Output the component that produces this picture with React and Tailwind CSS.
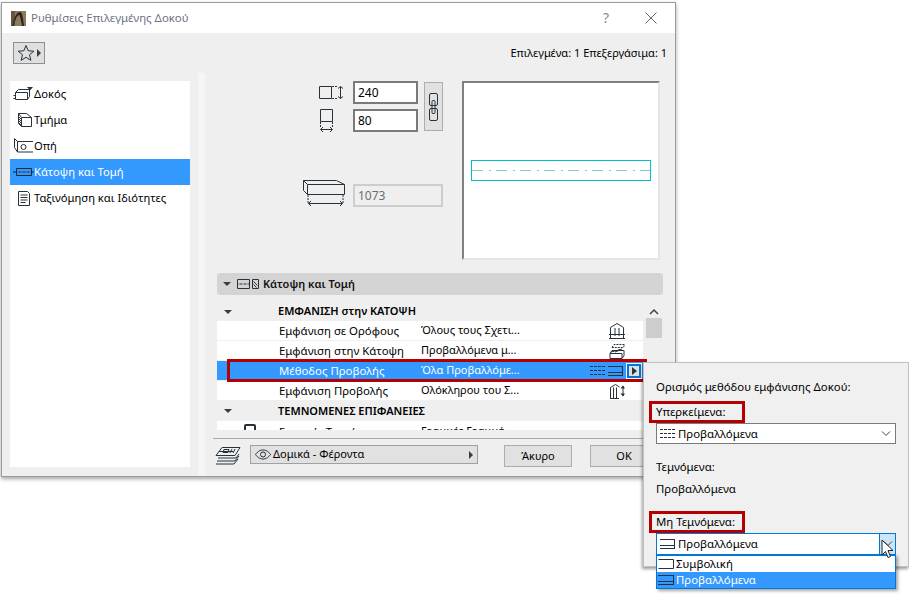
import React from 'react';

const INK = '#26323c';

const Ico = ({ w = 24, h = 16, children, className = '' }) => (
  <svg width={w} height={h} viewBox={`0 0 ${w} ${h}`} fill="none" stroke={INK} strokeWidth="1" className={`shrink-0 ${className}`}>
    {children}
  </svg>
);

const BeamIcon = () => (
  <Ico w={21} h={16}>
    <path d="M2.500 6.500h12v7h-12zM2.500 6.500l3-3h11v7l-2 3M.500 9.500h2M.500 12.500h2" />
    <path d="M14 1h6l-3 3.500z" fill={INK} stroke="none" />
  </Ico>
);
const SegmentIcon = () => (
  <Ico w={21} h={16}>
    <path d="M5.500 1.500h8l5 4v9h-10l-3-3v-10zM8.500 14.500v-9h10M8.500 5.500l-3-4" />
    <path d="M6.500 5v7M7.500 6v7" strokeDasharray="1 1" />
  </Ico>
);
const OpeningIcon = () => (
  <Ico w={21} h={16}>
    <path d="M20 3.500H4.500L1.500 .5v9l3 4.500H20M4.500 3.500V14" />
    <circle cx="10.500" cy="9" r="2.500" />
  </Ico>
);
const PlanIcon = () => (
  <Ico w={21} h={10}>
    <path d="M3.500 1.500h15v7h-15zM0 5h21" stroke="#1d2a36" />
    <path d="M4 5h14" stroke="#3399ff" strokeDasharray="2 2" />
  </Ico>
);
const ListIcon = () => (
  <Ico w={21} h={17}>
    <path d="M5.500 1.500h9l2 2v12h-11z" />
    <path d="M7.500 5h7M7.500 7.500h7M7.500 10h7M7.500 12.500h5" />
  </Ico>
);

const MENU = [
  { label: 'Δοκός', icon: <BeamIcon /> },
  { label: 'Τμήμα', icon: <SegmentIcon /> },
  { label: 'Οπή', icon: <OpeningIcon /> },
  { label: 'Κάτοψη και Τομή', icon: <PlanIcon />, active: true },
  { label: 'Ταξινόμηση και Ιδιότητες', icon: <ListIcon /> },
];

const HatchLines = () => (
  <Ico w={15} h={12}>
    <path d="M0 1.500h15M0 5.500h15M0 9.500h15" strokeDasharray="3 1" />
  </Ico>
);
const SolidLines = ({ w = 15 }) => (
  <Ico w={w} h={12}>
    <path d={`M0 1.500h${w}M0 7.500h${w}M0 10.500h${w}M${w - .5} 1.500v9`} />
  </Ico>
);

const FloorsIcon = () => (
  <Ico w={16} h={16}>
    <path d="M1.500 15.500v-11l6.500-4 6.500 4v11M0 15.500h16M0 11.500h16M6 5v8M10 5v8" />
  </Ico>
);
const PlanDisplayIcon = () => (
  <Ico w={16} h={16}>
    <path d="M3 4.500l2-3h10.500l-1 3H3z" strokeDasharray="2 1" />
    <path d="M1 10.500h12v5H1zM1 10.500l2-3h12v5l-2 3M2 9l11-3M6 9l5-2" />
  </Ico>
);
const ViewDisplayIcon = () => (
  <Ico w={16} h={16}>
    <path d="M1.500 15.500v-11l5-3 4 2.500M4.500 4.500v11M1 15.500h9M7.500 4.500v11" />
    <path d="M14 3v10" />
    <path d="M11.500 5.500L14 2.500l2 3zM11.500 10.500L14 13.500l2-3z" fill={INK} stroke="none" />
  </Ico>
);

const ROWS = [
  { label: 'Εμφάνιση σε Ορόφους', value: 'Όλους τους Σχετι...', icon: <FloorsIcon /> },
  { label: 'Εμφάνιση στην Κάτοψη', value: 'Προβαλλόμενα μ...', icon: <PlanDisplayIcon /> },
  { label: 'Μέθοδος Προβολής', value: 'Όλα Προβαλλόμε...', active: true },
  { label: 'Εμφάνιση Προβολής', value: 'Ολόκληρου του Σ...', icon: <ViewDisplayIcon /> },
];

const Caret = ({ className = '' }) => (
  <span className={`w-0 h-0 border-l-[4px] border-r-[4px] border-t-[4px] border-l-transparent border-r-transparent border-t-[#3c3c3c] ${className}`} />
);

const Field = ({ value }) => (
  <div className="w-[65px] h-[23px] border-2 border-[#7a7a7a] bg-white flex items-center pl-[3px] text-[12px] leading-none text-black">{value}</div>
);

const Dialog = () => (
  <div className="absolute left-[1px] top-[2px] w-[675px] h-[475px] border border-[#9a9a9a] bg-[#efefef] shadow-[0_2px_4px_rgba(0,0,0,0.35)] flex flex-col overflow-hidden">
    {/* title bar */}
    <div className="h-[30px] shrink-0 bg-white flex items-center pl-[9px]">
      <svg width="15" height="15" viewBox="0 0 15 15" className="shrink-0">
        <rect width="15" height="15" fill="#8a7a5e" />
        <path d="M1 15C3 6 6 1 9 1c2 0 3 5 4 14h-2C10 9 9 4 8 4 6 4 4 9 3 15z" fill="#2b2418" />
        <rect width="4" height="15" fill="#4a3f2d" opacity=".6" />
      </svg>
      <span className="ml-[5px] text-[11.400px] text-[#6f7187]">Ρυθμίσεις Επιλεγμένης Δοκού</span>
      <span className="ml-auto text-[14px] text-[#8a8a8a] mr-[36px] leading-none">?</span>
      <svg width="12" height="12" viewBox="0 0 12 12" stroke="#6b6b6b" className="mr-[18px]"><path d="M.5.500l11 11M11.500.500l-11 11" /></svg>
    </div>

    {/* toolbar */}
    <div className="h-[40px] shrink-0 flex items-start pl-[11px] pr-[8px] pt-[9px]">
      <div className="w-[32px] h-[22px] border border-[#8f8f8f] bg-[#dfdfdf] flex items-center pl-[3px] gap-[2px]">
        <svg width="18" height="18" viewBox="0 0 18 18" fill="none" stroke={INK}>
          <path d="M9 1.500l2.200 5.300 5.600.400-4.300 3.600 1.400 5.500L9 13.300l-4.900 3 1.400-5.500-4.300-3.600 5.600-.400z" />
        </svg>
        <span className="w-0 h-0 border-y-[4px] border-l-[4px] border-y-transparent border-l-[#3c3c3c]" />
      </div>
      <span className="ml-auto mt-[1px] text-[11px] leading-[20px] text-black">Επιλεγμένα: 1 Επεξεργάσιμα: 1</span>
    </div>

    {/* main area */}
    <div className="flex-1 flex min-h-0">
      <div className="ml-[8px] mt-[8px] mb-[9px] w-[180px] bg-white shrink-0">
        {MENU.map((m) => (
          <div key={m.label} className={`h-[26px] flex items-center pl-[3px] text-[11.200px] ${m.active ? 'bg-[#3399ff] text-white' : 'text-black'}`}>
            <span className="w-[21px] flex justify-center">{m.icon}</span>
            <span>{m.label}</span>
          </div>
        ))}
      </div>
      <div className="ml-[8px] w-[7px] bg-[#f5f5f5] shrink-0" />

      <div className="ml-[8px] flex-1 min-w-0 flex flex-col">
        {/* dimensions + preview */}
        <div className="h-[200px] shrink-0 flex pt-[8px]">
          <div className="w-[140px] flex flex-col items-end shrink-0 pr-[8px]">
            <Ico w={26} h={14} className="mt-[5px]">
              <path d="M.500.500h12v12h-12z" />
              <path d="M13 .500h6M13 12.500h6" strokeDasharray="2 1" />
              <path d="M21.500 1v11M19 2.500l2.500-2 2.500 2M19 10.500l2.500 2 2.500-2" />
            </Ico>
            <Ico w={16} h={24} className="mt-[9px] mr-[10px]">
              <path d="M1.500.500h12v12h-12z" />
              <path d="M1.500 13v6M13.500 13v6" strokeDasharray="2 1" />
              <path d="M2 20.500h11M4 18l-2.500 2.500L4 23M11 18l2.500 2.500L11 23" />
            </Ico>
            <Ico w={42} h={26} className="mt-[47px]">
              <path d="M4.500 4.500h37v10h-37zM4.500 14.500l-4-4v-10h33l8 4M.5.5l4 4" />
              <path d="M5 15v8M40 15v8" strokeDasharray="2 1" />
              <path d="M5.500 23.500h34M8 21l-2.500 2.500L8 26M37 21l2.500 2.500L37 26" />
            </Ico>
          </div>
          <div className="shrink-0 w-[109px]">
            <div className="flex">
              <div className="flex flex-col gap-[5px]">
                <Field value="240" />
                <Field value="80" />
              </div>
              <div className="ml-[6px] w-[19px] h-[49px] mt-[1px] border border-[#adadad] bg-[#e1e1e1] flex items-center justify-center shrink-0">
                <svg width="9" height="28" viewBox="0 0 9 28" fill="none" stroke={INK}>
                  <rect x=".500" y=".500" width="8" height="12" rx="1.500" />
                  <rect x=".500" y="15.500" width="8" height="12" rx="1.500" />
                  <rect x="3" y="7.500" width="3" height="13" rx="1" />
                </svg>
              </div>
            </div>
            <div className="mt-[52px] w-[90px] h-[23px] border-2 border-[#cdcdcd] bg-[#efefef] flex items-center pl-[3px] text-[12px] leading-none text-[#6d6d78]">1073</div>
          </div>
          <div className="w-[198px] h-[179px] border-2 border-t-[#808080] border-l-[#808080] border-r-[#e5e5e5] border-b-[#e5e5e5] bg-white flex items-center justify-center shrink-0">
            <div className="w-[180px] h-[21px] border border-[#00c0c8] flex items-center">
              <svg width="178" height="3" viewBox="0 0 178 3" fill="none"><path d="M0 1.500h178" stroke="#7fcfc0" strokeDasharray="11 6 2 5" /></svg>
            </div>
          </div>
        </div>

        {/* settings panel */}
        <div className="ml-[4px] w-[446px] h-[22px] shrink-0 bg-[#d4d4d4] rounded-[3px] flex items-center pl-[6px] text-[11px] font-semibold text-[#111]">
          <Caret />
          <svg width="24" height="12" viewBox="0 0 24 12" fill="none" stroke={INK} className="ml-[5px] shrink-0">
            <path d="M1.500 1.500h12v9h-12zM1 6h13" /><path d="M2 6h11" stroke="#d4d4d4" strokeDasharray="2 2" /><path d="M16.500 1.500h6v9h-6zM17.500 3.500l4 4M17.500 6.500l3 3" />
          </svg>
          <span className="ml-[3px]">Κάτοψη και Τομή</span>
        </div>

        <div className="ml-[4px] mt-[7px] h-[128px] w-[446px] shrink-0 relative overflow-hidden flex">
          <div className="w-[426px] shrink-0 text-[11.400px]">
            <div className="h-[19px] flex items-center font-semibold text-[11px]">
              <Caret className="ml-[7px]" />
              <span className="ml-[46px]">ΕΜΦΑΝΙΣΗ στην ΚΑΤΟΨΗ</span>
            </div>
            {ROWS.map((r) => (
              <div key={r.label} className={`h-[20px] flex items-center border-b border-[#efefef] ${r.active ? 'bg-[#3399ff] text-white' : 'bg-white text-black'}`}>
                <span className="ml-[62px] w-[142px] shrink-0 whitespace-nowrap">{r.label}</span>
                <span className="text-[11px]">{r.value}</span>
                {r.active ? (
                  <div className="ml-auto flex items-center mr-[1px] gap-[3px]">
                    <HatchLines />
                    <SolidLines />
                    <span className="w-[16px] h-[16px] bg-white flex items-center justify-center">
                      <span className="w-[14px] h-[14px] border-2 border-[#0078d7] bg-[#e1e1e1] flex items-center justify-center">
                        <span className="w-0 h-0 border-y-[4px] border-l-[5px] border-y-transparent border-l-[#333]" />
                      </span>
                    </span>
                  </div>
                ) : (
                  <span className="ml-auto mr-[18px]">{r.icon}</span>
                )}
              </div>
            ))}
            <div className="h-[20px] flex items-center font-semibold text-[11px]">
              <Caret className="ml-[7px]" />
              <span className="ml-[46px]">ΤΕΜΝΟΜΕΝΕΣ ΕΠΙΦΑΝΕΙΕΣ</span>
            </div>
            <div className="h-[20px] bg-white flex items-start">
              <span className="ml-[27px] w-[12px] h-[12px] border-2 border-[#26323c] rounded-[2px] mt-[3px] shrink-0" />
              <span className="ml-[23px] w-[142px] shrink-0 mt-[2px]">Γραμμές Τεμνόμενων</span>
              <span className="mt-[2px] text-[11px]">Γραμμές Γραμμή</span>
            </div>
          </div>
          <div className="w-[16px] ml-[3px] flex flex-col items-center">
            <svg width="10" height="8" viewBox="0 0 10 8" fill="none" stroke="#444" strokeWidth="1.500" className="mt-[6px]"><path d="M1 6l4-4 4 4" /></svg>
            <div className="mt-[2px] w-full h-[20px] bg-[#cdcdcd]" />
          </div>
          {/* red highlight over the selected row */}
          <div className="absolute left-[10px] top-[57px] w-[420px] h-[23px] border-[3px] border-[#b40000]" />
        </div>

        {/* footer */}
        <div className="mt-[8px] flex-1 border-t border-[#a8a8a8] flex items-start pt-[6px]">
          <svg width="26" height="19" viewBox="0 0 26 19" fill="none" stroke={INK} className="ml-[2px] mt-[1px] shrink-0">
            <path d="M7 1.500h18l-5 8H1zM4 5.500h14M3 12h18l3-4M2 15h18l4-5M1 18h18l4-5" />
            <path d="M9 3.500h5l-1 3H8zM17 3l-2 4M20 3l-2 4" />
          </svg>
          <div className="ml-[9px] w-[228px] h-[19px] border border-[#a0a0a0] bg-[#e1e1e1] flex items-center pl-[4px] text-[11px] text-black shrink-0">
            <svg width="16" height="11" viewBox="0 0 16 11" fill="none" stroke={INK}>
              <path d="M.500 5.500C3 2 5.500 1 8 1s5 1 7.500 4.500C13 9 10.500 10 8 10S3 9 .500 5.500z" />
              <circle cx="8" cy="5.500" r="2.500" />
            </svg>
            <span className="ml-[2px]">Δομικά - Φέροντα</span>
            <span className="ml-auto mr-[4px] w-0 h-0 border-y-[4px] border-l-[4px] border-y-transparent border-l-[#3c3c3c]" />
          </div>
          <div className="ml-[26px] w-[68px] h-[22px] border border-[#adadad] bg-[#e1e1e1] flex items-center justify-center text-[11px] text-black shrink-0">Άκυρο</div>
          <div className="ml-[18px] w-[68px] h-[22px] border border-[#adadad] bg-[#e1e1e1] flex items-center justify-center text-[11px] text-black shrink-0">OK</div>
        </div>
      </div>
    </div>
  </div>
);

const RedLabel = ({ children }) => (
  <div className="-ml-[7px] w-[96px] h-[22px] border-[3px] border-[#b40000] flex items-center pl-[4px] text-[11.400px] text-black">{children}</div>
);

const Popup = () => (
  <div className="absolute left-[643px] top-[362px] w-[266px] h-[205px] bg-[#f0f0f0] border border-[#c0c0c0] shadow-[-1px_2px_3px_rgba(0,0,0,0.4)] pl-[12px] pr-[12px] pt-[14px] text-[11.400px] text-black">
    <div className="h-[20px] leading-[20px]">Ορισμός μεθόδου εμφάνισης Δοκού:</div>
    <div className="mt-[4px]"><RedLabel>Υπερκείμενα:</RedLabel></div>
    <div className="h-[21px] border border-[#7a7a7a] bg-white flex items-center pl-[3px]">
      <HatchLines />
      <span className="ml-[3px]">Προβαλλόμενα</span>
      <svg width="10" height="6" viewBox="0 0 10 6" fill="none" stroke="#444" className="ml-auto mr-[4px]"><path d="M1 .500l4 4 4-4" /></svg>
    </div>
    <div className="mt-[13px] h-[20px] leading-[20px]">Τεμνόμενα:</div>
    <div className="mt-[2px] h-[20px] leading-[20px]">Προβαλλόμενα</div>
    <div className="mt-[12px]"><RedLabel>Μη Τεμνόμενα:</RedLabel></div>
    <div className="relative">
      <div className="h-[22px] border border-[#0078d7] bg-white flex items-center pl-[3px]">
        <SolidLines />
        <span className="ml-[3px]">Προβαλλόμενα</span>
        <span className="ml-auto w-[16px] h-full border-l border-[#0078d7] bg-[#cce4f7] flex items-center justify-center">
          <svg width="10" height="6" viewBox="0 0 10 6" fill="none" stroke="#444"><path d="M1 .500l4 4 4-4" /></svg>
        </span>
      </div>
      <div className="absolute left-0 right-0 top-[21px] h-[35px] border border-[#0078d7] border-t-2 bg-white shadow-[2px_2px_3px_rgba(0,0,0,0.35)] z-10">
        <div className="h-[16px] flex items-center pl-[1px]">
          <svg width="16" height="12" viewBox="0 0 16 12" fill="none" stroke={INK} className="shrink-0"><path d="M.500 1.500h15v9H.500" /></svg>
          <span className="ml-[2px]">Συμβολική</span>
        </div>
        <div className="h-[16px] flex items-center pl-[1px] bg-[#3399ff] text-white">
          <SolidLines w={16} />
          <span className="ml-[2px]">Προβαλλόμενα</span>
        </div>
      </div>
      {/* mouse pointer */}
      <svg width="14" height="20" viewBox="0 0 14 20" className="absolute left-[225px] top-[6px] z-20">
        <path d="M1 1v15l3.500-3.500 2.500 6 2.500-1-2.500-6h5z" fill="#fff" stroke="#222" />
      </svg>
    </div>
  </div>
);

export default function App() {
  return (
    <div className="relative w-[909px] h-[598px] bg-white overflow-hidden font-['Noto_Sans',sans-serif]">
      <Dialog />
      <Popup />
    </div>
  );
}
